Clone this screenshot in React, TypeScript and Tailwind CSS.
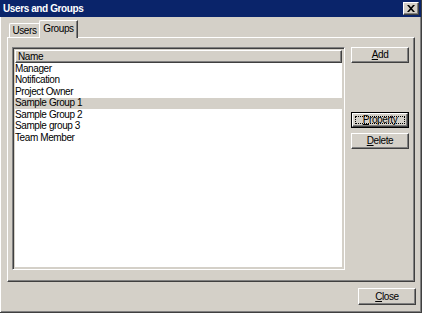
import React from "react";

const font = {
  fontFamily: "'Liberation Sans', Arial, sans-serif",
};

function U({ c }: { c: string }) {
  return <span className="underline underline-offset-[1px]">{c}</span>;
}

function Btn({ children, def }: { children: React.ReactNode; def?: boolean }) {
  if (def) {
    return (
      <div className="w-[58px] h-[16px] border border-black">
        <div className="w-full h-full border-t border-l border-white border-r border-b border-r-[#404040] border-b-[#404040] shadow-[inset_-1px_-1px_0_#808080] flex p-[2px]">
          <div className="flex-1 border border-dotted border-black flex items-center justify-center text-[10px] tracking-[-0.4px] leading-none text-black">
            {children}
          </div>
        </div>
      </div>
    );
  }
  return (
    <div className="w-[58px] h-[16px] border-t border-l border-white border-r border-b border-r-[#404040] border-b-[#404040] shadow-[inset_-1px_-1px_0_#808080] flex items-center justify-center text-[10px] tracking-[-0.4px] leading-none text-black">
      {children}
    </div>
  );
}

export default function App() {
  const items = [
    "Manager",
    "Notification",
    "Project Owner",
    "Sample Group 1",
    "Sample Group 2",
    "Sample group 3",
    "Team Member",
  ];
  return (
    <div
      style={font}
      className="w-[422px] h-[313px] bg-[#d4d0c8] flex flex-col border-r border-b border-[#404040] shadow-[inset_1px_0_0_#ffffff,inset_-1px_-1px_0_#808080] overflow-hidden"
    >
      {/* Title bar */}
      <div className="h-[17px] bg-[#0a246a] flex items-center justify-between pl-[3px] pr-[2px] shrink-0">
        <span className="text-white font-bold text-[10px] tracking-[-0.4px] leading-none">Users and Groups</span>
        <div className="w-[16px] h-[13px] bg-[#d4d0c8] border-t border-l border-white border-r border-b border-r-[#404040] border-b-[#404040] shadow-[inset_-1px_-1px_0_#808080] flex items-center justify-center">
          <svg width="8" height="7" viewBox="0 0 8 7">
            <path d="M0 0h2l2 2.2L6 0h2L5 3.5 8 7H6L4 4.8 2 7H0l3-3.5z" fill="#000" />
          </svg>
        </div>
      </div>

      {/* Body */}
      <div className="flex-1 flex flex-col pl-[7px] pr-[5px]">
        {/* Tabs */}
        <div className="flex items-end h-[17px] mt-[3px] pl-[2px] relative z-10">
          <div className="w-[30px] h-[14px] border-t border-l border-white rounded-tl-[2px] flex items-center justify-center text-[10px] tracking-[-0.4px] leading-none text-black">
            Users
          </div>
          <div className="w-[39px] h-[18px] -mb-px bg-[#d4d0c8] border-t border-l border-white border-r border-r-[#404040] shadow-[inset_-1px_0_0_#808080] rounded-tl-[2px] flex items-center justify-center text-[10px] tracking-[-0.4px] leading-none text-black pb-[1px]">
            Groups
          </div>
        </div>

        {/* Panel */}
        <div className="w-[408px] h-[245px] border-t border-l border-white border-r border-b border-r-[#404040] border-b-[#404040] shadow-[inset_-1px_-1px_0_#808080] flex pl-[4px] pt-[9px]">
          {/* List */}
          <div className="w-[333px] h-[223px] border-t border-l border-[#808080] border-r border-b border-r-white border-b-white shadow-[inset_1px_1px_0_#404040,inset_-1px_-1px_0_#d4d0c8] p-[2px] flex flex-col">
            <div className="bg-white flex-1 flex flex-col">
              <div className="h-[13px] bg-[#d4d0c8] border-t border-l border-white border-r border-b border-r-[#404040] border-b-[#404040] shadow-[inset_-1px_-1px_0_#808080] flex items-center pl-[2px] text-[10px] tracking-[-0.4px] leading-none text-black">
                Name
              </div>
              {items.map((it, i) => (
                <div
                  key={it}
                  className={
                    "h-[11.5px] flex items-center text-[10px] tracking-[-0.4px] leading-none text-black " +
                    (i === 3 ? "bg-[#d4d0c8]" : "")
                  }
                >
                  {it}
                </div>
              ))}
            </div>
          </div>

          {/* Buttons */}
          <div className="flex flex-col ml-[6px]">
            <Btn>
              <U c="A" />dd
            </Btn>
            <div className="h-[49px]" />
            <Btn def>
              <U c="P" />roperty
            </Btn>
            <div className="h-[5px]" />
            <Btn>
              <U c="D" />elete
            </Btn>
          </div>
        </div>

        {/* Bottom */}
        <div className="flex justify-end pt-[6px] pr-[0px]">
          <div className="w-[58px] h-[17px] border-t border-l border-white border-r border-b border-r-[#404040] border-b-[#404040] shadow-[inset_-1px_-1px_0_#808080] flex items-center justify-center text-[10px] tracking-[-0.4px] leading-none text-black">
            <U c="C" />lose
          </div>
        </div>
      </div>
    </div>
  );
}
